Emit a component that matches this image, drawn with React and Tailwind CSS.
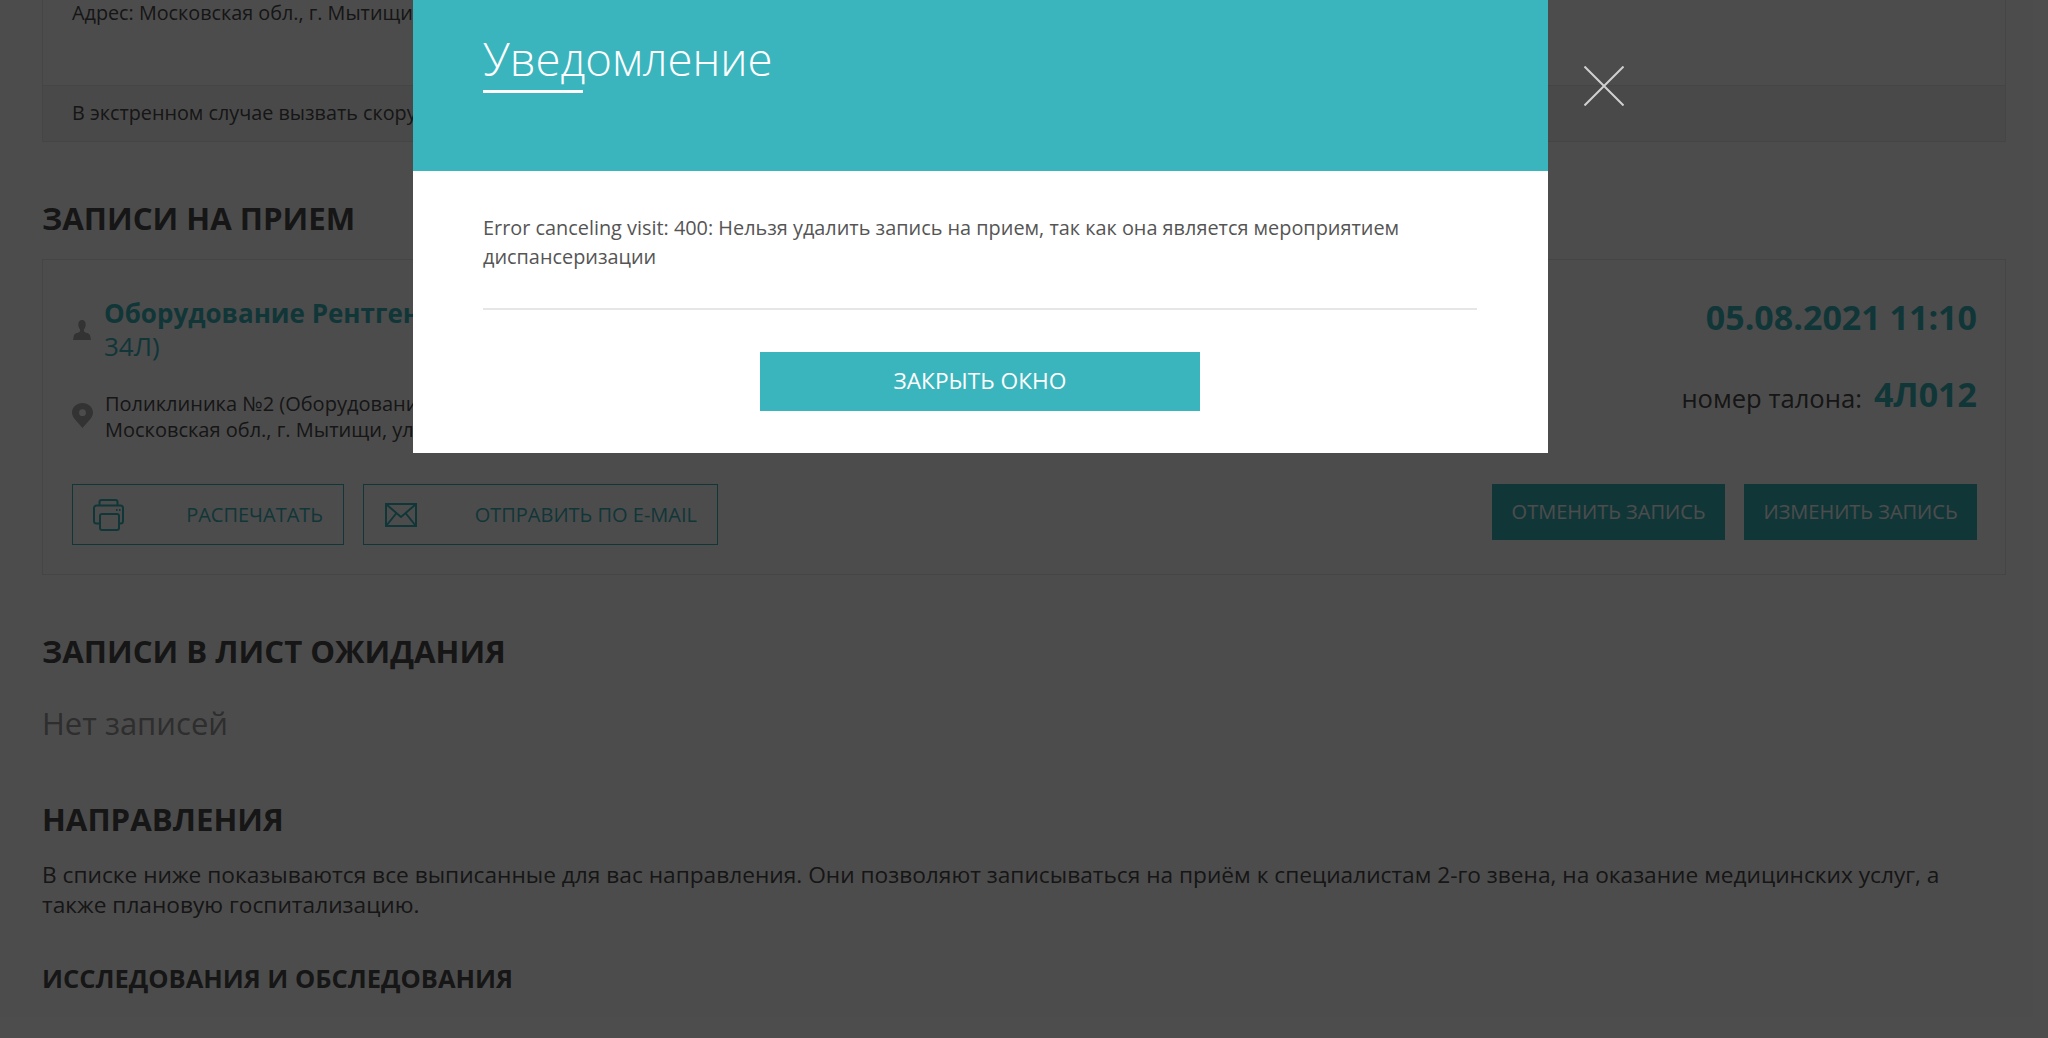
import React from 'react';

const font = { fontFamily: '"Open Sans", sans-serif' };

function PersonIcon() {
  return (
    <svg width="18" height="20" viewBox="0 0 18 20" className="shrink-0 text-[#aaaaaa]" fill="currentColor">
      <path d="M9 0c2.400 0 3.700 1.800 3.700 4.400 0 2-.8 3.800-1.700 4.900v1.600c0 1 1.700 1.500 3.300 2.200 1.700.8 2.700 1.500 3 3.200L18 20H0l.7-3.700c.3-1.700 1.300-2.400 3-3.200C5.300 12.400 7 11.900 7 10.900V9.300C6.100 8.200 5.300 6.400 5.300 4.400 5.300 1.800 6.600 0 9 0z" />
    </svg>
  );
}

function PinIcon() {
  return (
    <svg width="21" height="25" viewBox="0 0 21 25" className="shrink-0 text-[#aaaaaa]" fill="currentColor">
      <path fillRule="evenodd" d="M10.500 0C4.700 0 0 4.300 0 9.600c0 2.300 1 4.300 2.600 6.500L10.500 25l7.900-8.900C20 13.900 21 11.900 21 9.600 21 4.300 16.300 0 10.500 0zm0 6.300a3.400 3.400 0 1 1 0 6.800 3.400 3.400 0 0 1 0-6.800z" />
    </svg>
  );
}

function PrintIcon() {
  return (
    <svg width="31" height="32" viewBox="0 0 31 32" fill="none" stroke="currentColor" strokeWidth="2" className="shrink-0">
      <path d="M6.500 6.500V3a2 2 0 0 1 2-2h14a2 2 0 0 1 2 2v3.500" />
      <path d="M6 24.500H3.500a2.500 2.500 0 0 1-2.500-2.500V9a2.500 2.500 0 0 1 2.500-2.500h24A2.500 2.500 0 0 1 30 9v13a2.500 2.500 0 0 1-2.500 2.500H26" />
      <rect x="7" y="15" width="19" height="16" rx="2" />
      <path d="M23 11h1.500M26 11h1.500" />
    </svg>
  );
}

function MailIcon() {
  return (
    <svg width="32" height="24" viewBox="0 0 32 24" fill="none" stroke="currentColor" strokeWidth="2" className="shrink-0">
      <rect x="1" y="1" width="30" height="22" />
      <path d="M1.500 1.500 16 14 30.500 1.500M1.500 22.500 11.500 10M30.500 22.500 20.500 10" />
    </svg>
  );
}

function Page() {
  return (
    <div className="h-[1038px] overflow-hidden bg-white px-[42px] text-[#4a4a4a]">
      <div className="border-x border-b border-[#e6e6e6]">
        <div className="h-[85px] px-[29px] text-[19.800px] leading-[25px]">Адрес: Московская обл., г. Мытищи, ул. Коминтерна, д. 24</div>
        <div className="flex h-[56px] items-center border-t border-[#e6e6e6] bg-[#f5f5f5] px-[29px] pb-[2px] text-[19.800px]">В экстренном случае вызвать скорую помощь</div>
      </div>

      <h2 className="mt-[54px] text-[31.200px] leading-[44px] font-bold">ЗАПИСИ НА ПРИЕМ</h2>

      <div className="mt-[19px] h-[316px] border border-[#e6e6e6] pt-[36px] pr-[28px] pl-[29px]">
        <div className="flex justify-between">
          <div>
            <div className="flex items-center gap-[14px]">
              <div className="flex w-[18px] justify-center pl-[2px]"><PersonIcon /></div>
              <div className="pt-[1px] text-[26px] leading-[33px] text-[#3ab5bd]">
                <span className="font-bold">Оборудование Рентген</span> (Кабинет
                <br />
                34Л)
              </div>
            </div>
            <div className="mt-[28px] flex items-center gap-[12px]">
              <div className="-mt-[3px]"><PinIcon /></div>
              <div className="text-[20px] leading-[26px]">
                Поликлиника №2 (Оборудование)
                <br />
                Московская обл., г. Мытищи, ул. Коминтерна
              </div>
            </div>
          </div>
          <div className="flex flex-col items-end">
            <div className="-mt-[2px] text-[34px] leading-[46px] font-bold text-[#3ab5bd]">05.08.2021 11:10</div>
            <div className="mt-[31px] flex items-start gap-[12px]">
              <span className="pt-[5px] text-[25.600px] leading-[46px]">номер талона:</span>
              <span className="text-[34px] leading-[46px] font-bold text-[#3ab5bd]">4Л012</span>
            </div>
          </div>
        </div>

        <div className="mt-[41px] flex items-start justify-between">
          <div className="flex gap-[19px]">
            <div className="flex h-[61px] w-[272px] items-center justify-between border border-[#3ab5bd] pr-[20px] pl-[20px] text-[20px] text-[#3ab5bd]">
              <PrintIcon />
              <span>РАСПЕЧАТАТЬ</span>
            </div>
            <div className="flex h-[61px] w-[355px] items-center justify-between border border-[#3ab5bd] pr-[20px] pl-[21px] text-[20px] text-[#3ab5bd]">
              <MailIcon />
              <span>ОТПРАВИТЬ ПО E-MAIL</span>
            </div>
          </div>
          <div className="flex gap-[19px]">
            <div className="flex h-[56px] w-[233px] items-center justify-center bg-[#3ab5bd] text-[20px] text-white">ОТМЕНИТЬ ЗАПИСЬ</div>
            <div className="flex h-[56px] w-[233px] items-center justify-center bg-[#3ab5bd] text-[20px] text-white">ИЗМЕНИТЬ ЗАПИСЬ</div>
          </div>
        </div>
      </div>

      <h2 className="mt-[54px] text-[31.200px] leading-[44px] font-bold">ЗАПИСИ В ЛИСТ ОЖИДАНИЯ</h2>
      <p className="mt-[30px] text-[31px] leading-[40px] text-[#999]">Нет записей</p>

      <h2 className="mt-[54px] text-[31.200px] leading-[44px] font-bold">НАПРАВЛЕНИЯ</h2>
      <p className="mt-[19px] text-[22.690px] leading-[30px]">
        В списке ниже показываются все выписанные для вас направления. Они позволяют записываться на приём к специалистам 2-го звена, на оказание медицинских услуг, а также плановую госпитализацию.
      </p>

      <h3 className="mt-[40px] text-[25.500px] leading-[36px] font-bold">ИССЛЕДОВАНИЯ И ОБСЛЕДОВАНИЯ</h3>
    </div>
  );
}

export default function App() {
  return (
    <div className="relative h-[1038px] overflow-hidden" style={font}>
      <Page />
      <div className="absolute inset-0 bg-black/70" />

      <div className="absolute top-0 left-[413px] w-[1135px] bg-white">
        <div className="h-[171px] bg-[#3ab5bd] pt-[28px] pr-[71px] pl-[70px] text-white">
          <div className="text-[45.500px] leading-[60px] font-light">Уведомление</div>
          <div className="mt-[2px] h-[3px] w-[100px] bg-white" />
        </div>
        <div className="h-[282px] pt-[43px] pr-[71px] pl-[70px]">
          <p className="text-[19.860px] leading-[28.500px] text-[#555]">
            Error canceling visit: 400: Нельзя удалить запись на прием, так как она является мероприятием диспансеризации
          </p>
          <div className="mt-[37px] h-[2px] bg-[#e6e6e6]" />
          <div className="mt-[42px] flex justify-center">
            <button className="h-[59px] w-[440px] bg-[#3ab5bd] text-[22.700px] text-white">ЗАКРЫТЬ ОКНО</button>
          </div>
        </div>
      </div>

      <svg width="40" height="40" viewBox="0 0 40 40" className="absolute top-[66px] left-[1584px] text-[#d0d0d0]" stroke="currentColor" strokeWidth="2">
        <path d="M0.500 0.500 39.500 39.500M39.500 0.500 0.500 39.500" />
      </svg>
    </div>
  );
}
